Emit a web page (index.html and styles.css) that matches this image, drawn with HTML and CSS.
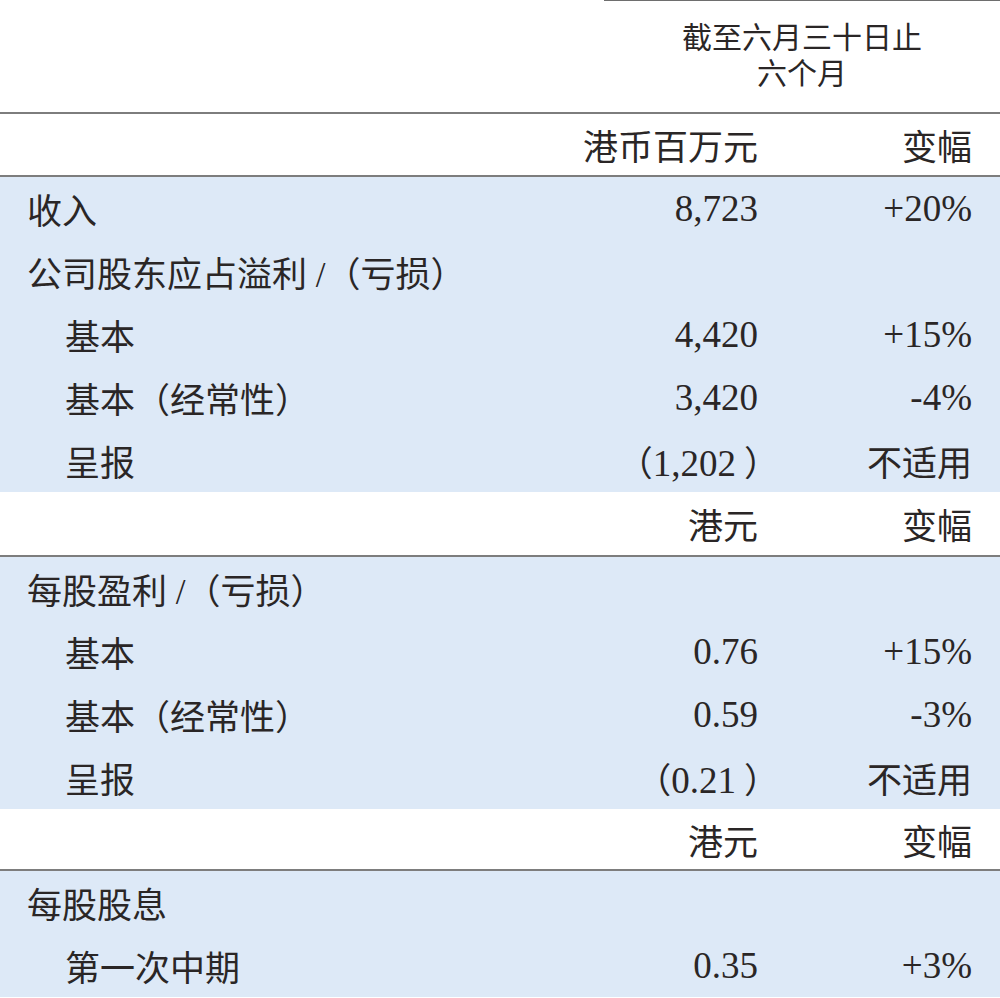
FILE: index.html
```html
<!DOCTYPE html>
<html lang="zh-CN">
<head>
<meta charset="utf-8">
<link rel="stylesheet" href="styles.css">
</head>
<body>
<div class="sheet">
  <div class="head">
    <div class="period"><div>截至六月三十日止</div><div>六个月</div></div>
  </div>
  <div class="row rule2 first"><span class="lbl"></span><span class="val">港币百万元</span><span class="val">变幅</span></div>
  <div class="band">
    <div class="row"><span class="lbl">收入</span><span class="val num">8,723</span><span class="val num">+20%</span></div>
    <div class="row"><span class="lbl">公司股东应占溢利 /（亏损）</span><span class="val"></span><span class="val"></span></div>
    <div class="row"><span class="lbl sub">基本</span><span class="val num">4,420</span><span class="val num">+15%</span></div>
    <div class="row"><span class="lbl sub">基本（经常性）</span><span class="val num">3,420</span><span class="val num">-4%</span></div>
    <div class="row"><span class="lbl sub">呈报</span><span class="val"><span class="open">（</span><span class="num">1,202</span><span class="close">）</span></span><span class="val">不适用</span></div>
  </div>
  <div class="row rule2"><span class="lbl"></span><span class="val">港元</span><span class="val">变幅</span></div>
  <div class="band">
    <div class="row"><span class="lbl">每股盈利 /（亏损）</span><span class="val"></span><span class="val"></span></div>
    <div class="row"><span class="lbl sub">基本</span><span class="val num">0.76</span><span class="val num">+15%</span></div>
    <div class="row"><span class="lbl sub">基本（经常性）</span><span class="val num">0.59</span><span class="val num">-3%</span></div>
    <div class="row"><span class="lbl sub">呈报</span><span class="val"><span class="open">（</span><span class="num">0.21</span><span class="close">）</span></span><span class="val">不适用</span></div>
  </div>
  <div class="row short rule2"><span class="lbl"></span><span class="val">港元</span><span class="val">变幅</span></div>
  <div class="band">
    <div class="row"><span class="lbl">每股股息</span><span class="val"></span><span class="val"></span></div>
    <div class="row"><span class="lbl sub">第一次中期</span><span class="val num">0.35</span><span class="val num">+3%</span></div>
  </div>
</div>
</body>
</html>
```
FILE: styles.css
```css
html, body {
  margin: 0;
  padding: 0;
  background: #ffffff;
}
body {
  width: 1000px;
  height: 998px;
  overflow: hidden;
  font-family: "Liberation Serif", "Noto Sans CJK SC", serif;
  color: #2a2626;
}
.sheet {
  display: flex;
  flex-direction: column;
}
.head {
  height: 112px;
  display: flex;
  justify-content: flex-end;
  border-bottom: 2px solid #7d7d7d;
}
.period {
  width: 396px;
  border-top: 1px solid #6e6e6e;
  text-align: center;
  font-family: "Noto Sans CJK SC", sans-serif;
  font-size: 30px;
  padding-top: 16px;
  box-sizing: border-box;
  display: flex;
  flex-direction: column;
}
.period div {
  height: 36px;
  line-height: 36px;
}
.row {
  display: grid;
  grid-template-columns: 1fr 214px 214px;
  align-items: center;
  height: 63px;
  padding: 0 28px 0 27px;
  font-size: 35px;
  box-sizing: border-box;
}
.rule2 {
  border-bottom: 2px solid #7d7d7d;
  height: 65px;
}
.rule2.first {
  height: 63px;
}
.short.rule2 {
  height: 62px;
}
.band {
  background: #dde9f7;
}
.lbl {
  white-space: nowrap;
}
.sub {
  padding-left: 38px;
}
.val {
  text-align: right;
  white-space: nowrap;
}
.num {
  font-size: 37px;
}
.open {
  margin-right: 0;
}
.close {
  margin-left: 8px;
  margin-right: -21px;
}
```
